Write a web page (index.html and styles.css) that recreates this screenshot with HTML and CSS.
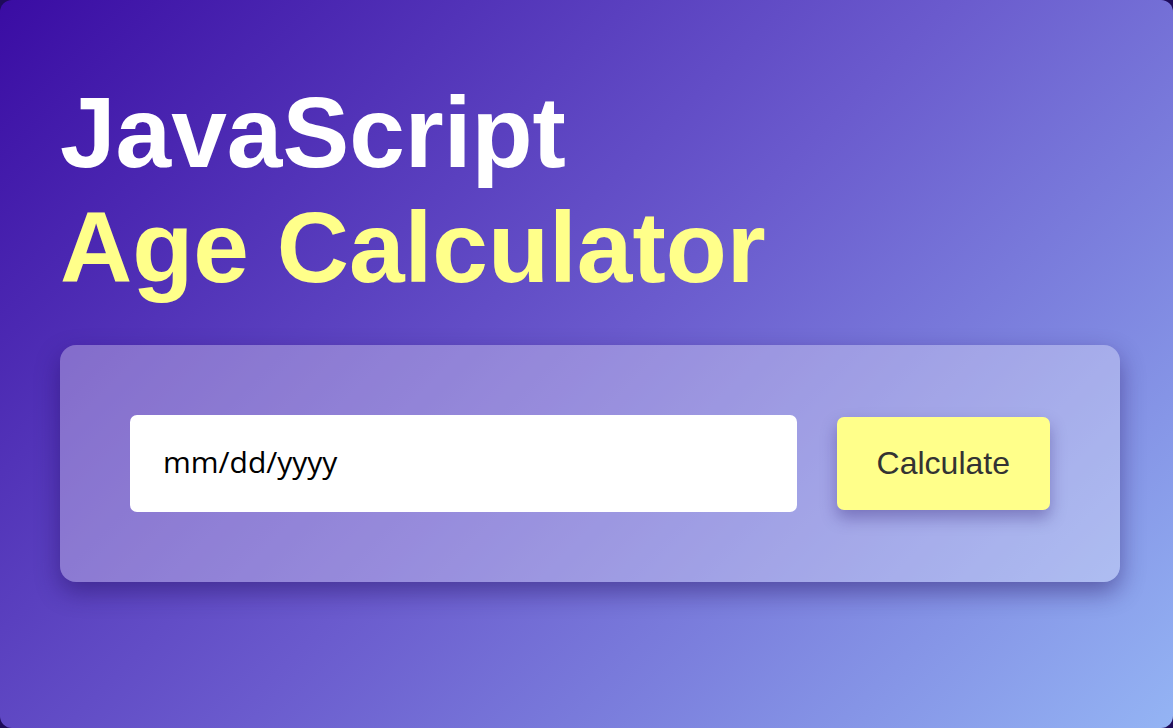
FILE: index.html
```html
<!DOCTYPE html>
<html lang="en">
<head>
<meta charset="utf-8">
<title>JavaScript Age Calculator</title>
<link rel="stylesheet" href="styles.css">
</head>
<body>
  <main class="page">
    <h1 class="title">JavaScript<br><span class="accent">Age Calculator</span></h1>
    <section class="card">
      <div class="date-field">mm/dd/yyyy</div>
      <button class="calc-btn" type="button">Calculate</button>
    </section>
  </main>
</body>
</html>
```

FILE: styles.css
```css
html {
  background: #1e0b5a;
  height: 100%;
}
body {
  margin: 0;
  height: 100%;
}
.page {
  box-sizing: border-box;
  height: 728px;
  border-radius: 12px;
  background: linear-gradient(135deg, #3a0ca3 0%, #6a5acd 50%, #94b4f4 100%);
  padding: 75px 53px 0 60px;
  font-family: "Liberation Sans", Arial, sans-serif;
  overflow: hidden;
}
.title {
  margin: 0;
  font-size: 100px;
  font-weight: 700;
  line-height: 115px;
  color: #ffffff;
}
.accent {
  color: #ffff8a;
}
.card {
  margin-top: 40px;
  display: flex;
  align-items: center;
  gap: 40px;
  padding: 70px;
  border-radius: 16px;
  background: rgba(255, 255, 255, 0.3);
  box-shadow: 0 10px 24px rgba(30, 10, 90, 0.45);
}
.date-field {
  flex: 1;
  height: 97px;
  box-sizing: border-box;
  display: flex;
  align-items: center;
  padding-left: 33px;
  padding-bottom: 4px;
  background: #ffffff;
  border-radius: 7px;
  font-family: "Open Sans", "Noto Sans", sans-serif;
  font-size: 30px;
  color: #000000;
}
.calc-btn {
  height: 93px;
  padding: 0 40px;
  border: none;
  border-radius: 7px;
  background: #ffff8a;
  color: #333333;
  font-family: "Liberation Sans", Arial, sans-serif;
  font-size: 32px;
  box-shadow: 0 8px 16px rgba(40, 20, 110, 0.35);
}
```
